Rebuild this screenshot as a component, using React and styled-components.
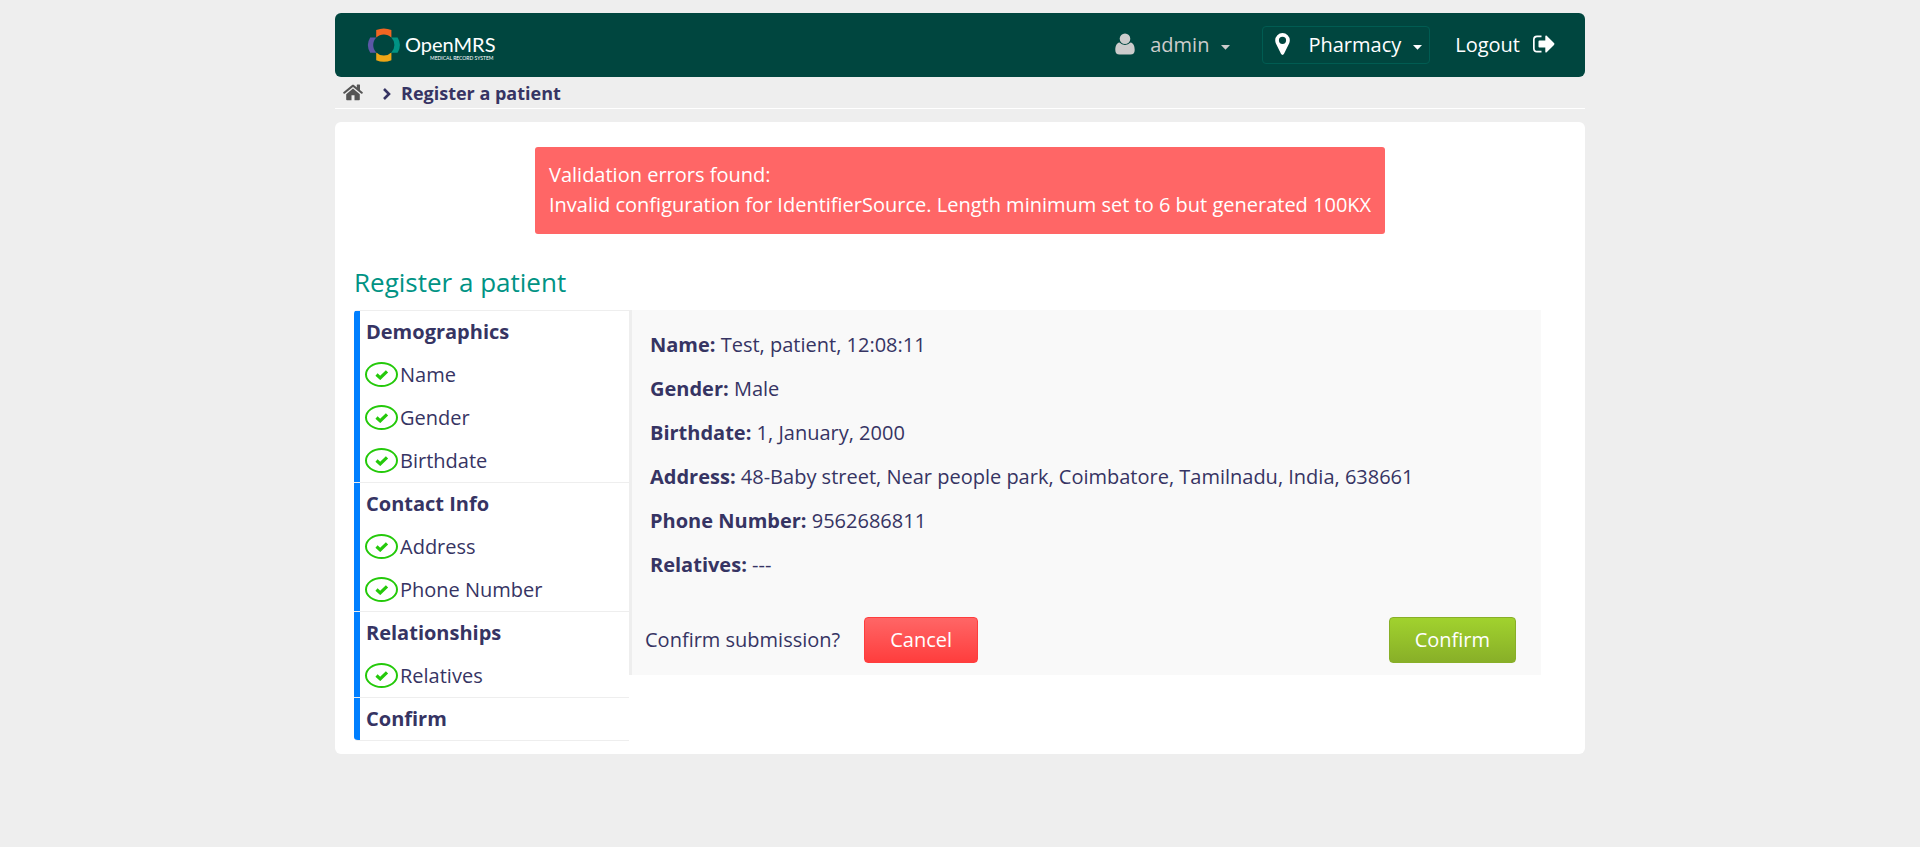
import React from "react";
import styled, { createGlobalStyle } from "styled-components";

const GlobalStyle = createGlobalStyle`
  *, *::before, *::after { box-sizing: border-box; }
  body {
    margin: 0;
    background: #eeeeee;
    color: #363463;
    font-family: "Open Sans", "Noto Sans", sans-serif;
    font-size: 20px;
    font-weight: 400;
    line-height: 30px;
  }
  a { color: inherit; text-decoration: none; }
  button { font: inherit; cursor: pointer; }
  svg { display: block; flex: none; }
`;

const Page = styled.div`
  max-width: 1250px;
  margin: 0 auto;
  padding: 13px 0;
`;

const Header = styled.header`
  display: flex;
  align-items: center;
  justify-content: space-between;
  height: 64px;
  padding: 0 30px 0 32px;
  border-radius: 6px;
  background: #00463f;
  color: #fff;
`;

const HeaderNav = styled.nav`
  display: flex;
  align-items: center;
`;

const HeaderButton = styled.button`
  display: flex;
  align-items: center;
  height: 38px;
  padding: 0;
  border: 0;
  background: none;
  color: ${(p) => p.$color || "#fff"};

  svg:first-child { margin: 0 15px 2px 0; }
  svg:last-child { margin: 4px 0 0 12px; }
`;

const LocationButton = styled(HeaderButton)`
  margin: 0 25px 0 32px;
  padding: 0 7px 0 12px;
  border: 1px solid #005c52;
  border-radius: 4px;

  svg:first-child { margin-right: 18px; }
`;

const LogoutLink = styled.a`
  display: flex;
  align-items: center;
  gap: 13px;

  svg { margin-bottom: 2px; }
`;

const Breadcrumbs = styled.nav`
  display: flex;
  align-items: center;
  height: 32px;
  padding: 0 8px;
  border-bottom: 1px solid #fff;
  font-size: 18px;
  font-weight: 700;

  span { margin-left: 10px; }
  a + svg { margin: 3px 0 0 20px; }
`;

const Panel = styled.main`
  margin-top: 13px;
  padding: 25px 19px 13px;
  border-radius: 6px;
  background: #fff;
`;

const Alert = styled.div`
  width: 850px;
  max-width: 100%;
  margin: 0 auto;
  padding: 13px 8px 14px 14px;
  border-radius: 3px;
  background: #ff6666;
  color: #fff;

  p { margin: 0; }
`;

const Title = styled.h2`
  margin: 28px 0 8px;
  color: #009384;
  font-size: 26px;
  font-weight: 400;
  line-height: 40px;
`;

const Columns = styled.div`
  display: flex;
  align-items: flex-start;
  margin-right: 25px;
`;

const Steps = styled.ul`
  flex: none;
  width: 275px;
  margin: 0;
  padding: 0;
  list-style: none;
  border-bottom: 1px solid #eee;
  border-radius: 4px 0 0 4px;
  overflow: hidden;
`;

const Section = styled.li`
  border-top: 1px solid #eee;

  > div { border-left: 6px solid #007fff; }
`;

const SectionTitle = styled.div`
  height: 42px;
  padding: 6px;
  font-weight: 700;
`;

const StepList = styled.ul`
  margin: 0;
  padding: 0;
  list-style: none;
  border-left: 6px solid #007fff;
`;

const Step = styled.li`
  display: flex;
  align-items: center;
  gap: 2px;
  height: 43px;
  padding-left: 5px;
`;

const Badge = styled.span`
  display: flex;
  align-items: center;
  justify-content: center;
  width: 33px;
  height: 25px;
  border: 2px solid #24c90a;
  border-radius: 50%;
  color: #24c90a;
`;

const Content = styled.section`
  flex: 1;
  padding: 20px 25px 12px 13px;
  border-left: 3px solid #eee;
  background: #f9f9f9;
`;

const Summary = styled.dl`
  margin: 0 0 37px;
  padding-left: 5px;
`;

const Field = styled.div`
  margin-bottom: 14px;

  dt, dd { display: inline; margin: 0; }
  dt { font-weight: 700; }
`;

const Actions = styled.div`
  display: flex;
  align-items: center;
`;

const ActionButton = styled.button`
  height: 46px;
  padding: 0 25px;
  border: 1px solid ${(p) => p.$edge};
  border-radius: 4px;
  background: linear-gradient(${(p) => p.$from}, ${(p) => p.$to});
  color: #fff;
`;

const CancelButton = styled(ActionButton)`
  margin: 0 auto 0 24px;
`;

const Logo = () => (
  <svg width="134" height="36" viewBox="0 0 134 36" role="img" aria-label="OpenMRS Medical Record System">
    <path fill="#f26522" d="M9.200 3Q16.800 0 24.400 3V14H9.200Z" />
    <path fill="#eea616" d="M9.200 33.200Q16.800 36.200 24.400 33.200V22H9.200Z" />
    <path fill="#5b57a6" d="M3.200 10.400Q-1.500 18 3.200 25.700H12V10.400Z" />
    <path fill="#009384" d="M30.600 10.400Q35.300 18 30.600 25.700H22V10.400Z" />
    <circle cx="16.800" cy="18" r="10.600" fill="#00463f" />
    <text x="38" y="25" fill="#fff" fontFamily="Lato, sans-serif" fontSize="20" fontWeight="400">OpenMRS</text>
    <text x="63" y="33" fill="#fff" fontFamily="Lato, sans-serif" fontSize="5" fontWeight="400">MEDICAL RECORD SYSTEM</text>
  </svg>
);

const UserIcon = () => (
  <svg width="20" height="22" viewBox="0 0 20 22" fill="currentColor" aria-hidden="true">
    <circle cx="10" cy="5.700" r="5.300" />
    <path d="M4.500 9.500C1.200 10 .3 13.500.3 17c0 3 1.500 4.500 4.200 4.500h11c2.700 0 4.200-1.500 4.200-4.500 0-3.500-.9-7-4.200-7.500a7.500 7.500 0 0 1-11 0Z" />
  </svg>
);

const PinIcon = () => (
  <svg width="15" height="22" viewBox="0 0 15 22" fill="currentColor" aria-hidden="true">
    <path fillRule="evenodd" d="M7.500 0A7.300 7.300 0 0 0 .2 7.300c0 1.200.3 2.200.7 3.100l5.200 10.700c.5 1.100 2.300 1.100 2.800 0l5.200-10.700c.4-.9.7-1.900.7-3.100A7.300 7.300 0 0 0 7.500 0Zm0 3.700a3.600 3.600 0 1 1 0 7.200 3.600 3.600 0 0 1 0-7.200Z" />
  </svg>
);

const Caret = () => (
  <svg width="9" height="5" viewBox="0 0 9 5" fill="currentColor" aria-hidden="true">
    <path d="M0 0h9L4.500 4.800Z" />
  </svg>
);

const LogoutIcon = () => (
  <svg width="22" height="18" viewBox="0 0 22 18" fill="currentColor" aria-hidden="true">
    <path d="M8.500.5H4A4 4 0 0 0 0 4.500v9a4 4 0 0 0 4 4h4.500v-1.700H4.300a2.600 2.600 0 0 1-2.600-2.600V4.800a2.600 2.600 0 0 1 2.600-2.600h4.200Z" />
    <path d="M5.500 6.500c0-.6.300-.9.900-.9h5.900V1.300c0-.9.800-1.200 1.400-.6l7.300 7.400c.6.600.6 1.200 0 1.800l-7.300 7.400c-.6.600-1.400.3-1.400-.6v-4.300H6.400c-.6 0-.9-.3-.9-.9Z" />
  </svg>
);

const HomeIcon = () => (
  <svg width="20" height="17" viewBox="0 0 20 17" fill="#555" aria-hidden="true">
    <path d="M10 4.600 3.200 10.200v5.200c0 .5.300.8.800.8h4.500v-4.900h3v4.900H16c.5 0 .8-.3.800-.8v-5.200Z" />
    <path d="M19.700 8.300 17 6V1c0-.3-.2-.5-.5-.5h-2.200c-.3 0-.5.200-.5.500v2.400L11.200 1.200c-.7-.6-1.700-.6-2.400 0L.3 8.300c-.2.200-.2.400-.1.600l.7.800c.2.200.4.200.7.100L10 2.900l8.400 6.900c.3.100.5.100.7-.1l.7-.8c.1-.2.100-.4-.1-.6Z" />
  </svg>
);

const ChevronIcon = () => (
  <svg width="8" height="12" viewBox="0 0 8 12" fill="none" stroke="currentColor" strokeWidth="2.600" aria-hidden="true">
    <path d="m1 1 5 5-5 5" />
  </svg>
);

const CheckIcon = () => (
  <svg width="14" height="10" viewBox="0 0 14 10" fill="none" stroke="currentColor" strokeWidth="3.200" aria-hidden="true">
    <path d="m1.500 4.500 3.700 3.400 6.800-6.600" />
  </svg>
);

const sections = [
  { title: "Demographics", steps: ["Name", "Gender", "Birthdate"] },
  { title: "Contact Info", steps: ["Address", "Phone Number"] },
  { title: "Relationships", steps: ["Relatives"] },
  { title: "Confirm", steps: [] },
];

const fields = [
  ["Name", "Test, patient, 12:08:11"],
  ["Gender", "Male"],
  ["Birthdate", "1, January, 2000"],
  ["Address", "48-Baby street, Near people park, Coimbatore, Tamilnadu, India, 638661"],
  ["Phone Number", "9562686811"],
  ["Relatives", "---"],
];

export default function App() {
  return (
    <>
      <GlobalStyle />
      <Page>
        <Header>
          <a href="#home"><Logo /></a>
          <HeaderNav>
            <HeaderButton type="button" $color="#cccccc">
              <UserIcon />
              admin
              <Caret />
            </HeaderButton>
            <LocationButton type="button">
              <PinIcon />
              Pharmacy
              <Caret />
            </LocationButton>
            <LogoutLink href="#logout">
              Logout
              <LogoutIcon />
            </LogoutLink>
          </HeaderNav>
        </Header>
        <Breadcrumbs aria-label="Breadcrumb">
          <a href="#home" aria-label="Home"><HomeIcon /></a>
          <ChevronIcon />
          <span>Register a patient</span>
        </Breadcrumbs>
        <Panel>
          <Alert role="alert">
            <p>Validation errors found:</p>
            <p>Invalid configuration for IdentifierSource. Length minimum set to 6 but generated 100KX</p>
          </Alert>
          <Title>Register a patient</Title>
          <Columns>
            <Steps>
              {sections.map((section) => (
                <Section key={section.title}>
                  <SectionTitle>{section.title}</SectionTitle>
                  {section.steps.length > 0 && (
                    <StepList>
                      {section.steps.map((step) => (
                        <Step key={step}>
                          <Badge><CheckIcon /></Badge>
                          {step}
                        </Step>
                      ))}
                    </StepList>
                  )}
                </Section>
              ))}
            </Steps>
            <Content>
              <Summary>
                {fields.map(([label, value]) => (
                  <Field key={label}>
                    <dt>{label}:</dt> <dd>{value}</dd>
                  </Field>
                ))}
              </Summary>
              <Actions>
                <span>Confirm submission?</span>
                <CancelButton type="button" $edge="#ff3d3d" $from="#ff6666" $to="#ff3d3d">Cancel</CancelButton>
                <ActionButton type="submit" $edge="#88af28" $from="#a1d22e" $to="#88af28">Confirm</ActionButton>
              </Actions>
            </Content>
          </Columns>
        </Panel>
      </Page>
    </>
  );
}
